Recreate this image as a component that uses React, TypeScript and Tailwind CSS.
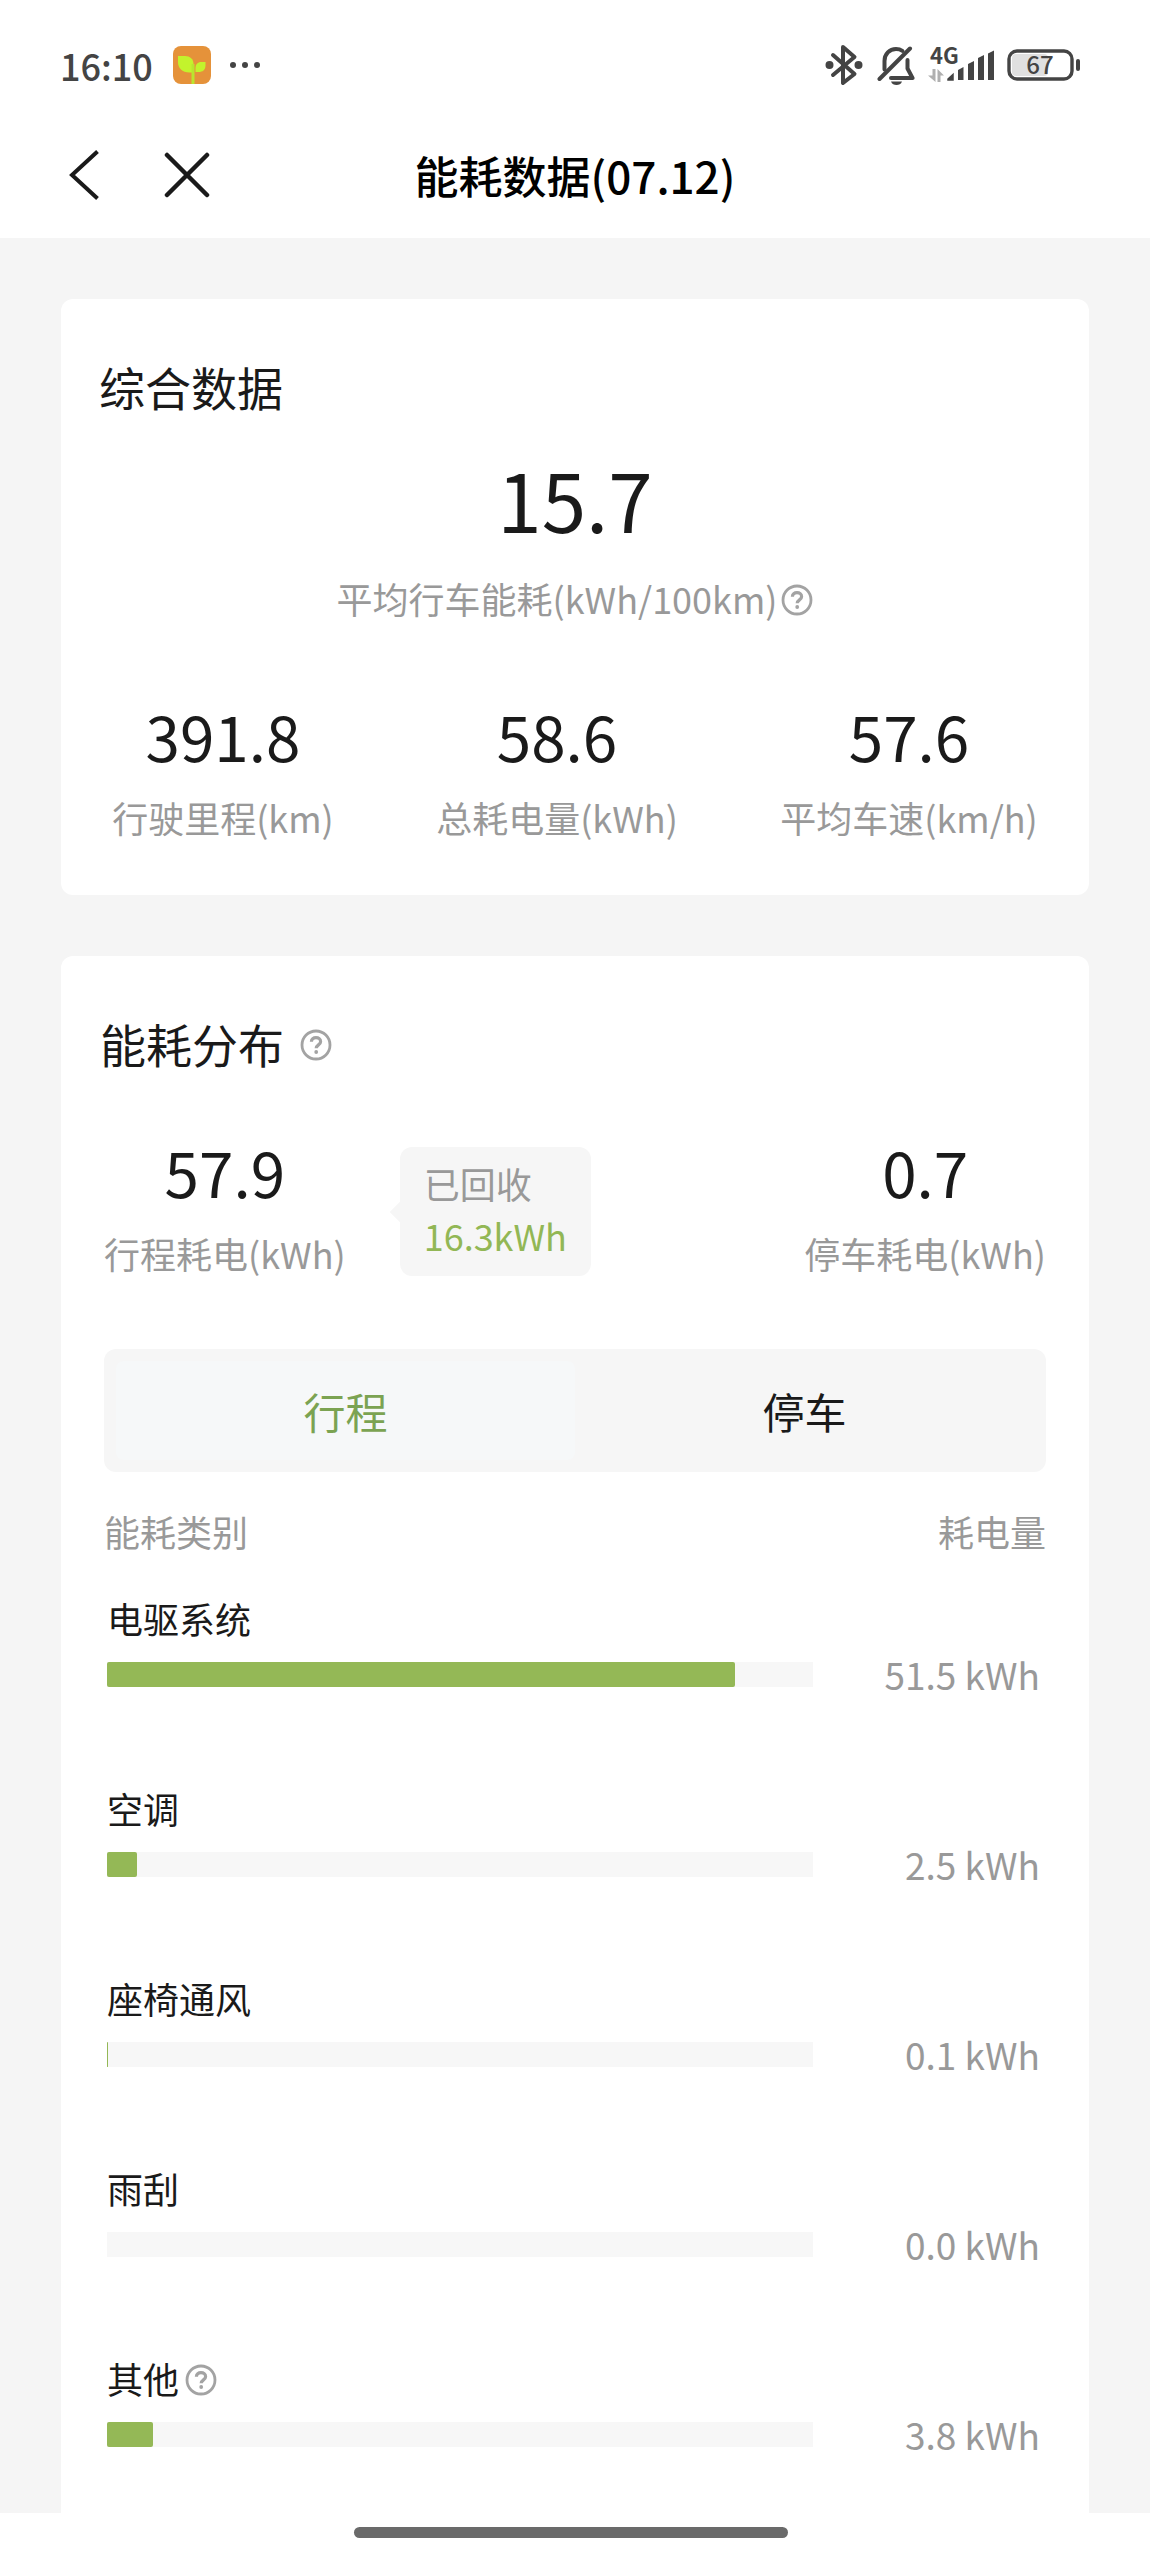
import { useState } from "react";

interface Consumption {
  name: string;
  value: number;
  help?: boolean;
}

const TRIP_TOTAL = 57.9;

const tripItems: Consumption[] = [
  { name: "电驱系统", value: 51.5 },
  { name: "空调", value: 2.5 },
  { name: "座椅通风", value: 0.1 },
  { name: "雨刮", value: 0.0 },
  { name: "其他", value: 3.8, help: true },
];

const summary = [
  { value: "391.8", label: "行驶里程(km)" },
  { value: "58.6", label: "总耗电量(kWh)" },
  { value: "57.6", label: "平均车速(km/h)" },
];

const tabs = ["行程", "停车"];

function HelpButton({ label }: { label: string }) {
  return (
    <button type="button" aria-label={label} className="shrink-0 pt-1">
      <svg viewBox="0 0 32 32" className="size-8" fill="none" stroke="#a3a3a3">
        <circle cx="16" cy="16" r="14" strokeWidth="2.8" />
        <path
          d="M11.4 12.8c0-2.600 2-4.100 4.600-4.100s4.600 1.500 4.600 4c0 3.200-4.400 3.200-4.400 6.600"
          strokeWidth="3.200"
        />
        <circle cx="16.2" cy="23" r="1.900" fill="#a3a3a3" stroke="none" />
      </svg>
    </button>
  );
}

function StatusBar() {
  return (
    <div className="flex h-[130px] items-center justify-between pr-[69px] pl-[60px] text-[#444]">
      <div className="flex items-center">
        <span className="text-[36px] leading-[48px] font-medium">16:10</span>
        <svg viewBox="0 0 38 38" className="ml-5 size-[38px]">
          <rect width="38" height="38" rx="8" fill="#e5923a" />
          <path
            d="M5 10h7c5 0 8.500 3 8.500 8v8.500h-4C9 26.500 5 22 5 16z"
            fill="#c3f32c"
          />
          <path d="M32.500 16h-4c-4 0-6 2.500-6 6v4h3c4 0 7-2 7-6.500z" fill="#c3f32c" />
          <path d="M20 18v20" stroke="#b9e62e" strokeWidth="3" />
        </svg>
        <svg viewBox="0 0 32 8" className="ml-[18px] h-2 w-8" fill="#444">
          <circle cx="4" cy="4" r="3" />
          <circle cx="16" cy="4" r="3" />
          <circle cx="28" cy="4" r="3" />
        </svg>
      </div>

      <div className="flex items-center">
        <svg
          viewBox="0 0 38 42"
          className="h-[42px] w-[38px]"
          fill="none"
          stroke="#444"
          strokeWidth="4"
          strokeLinejoin="round"
          strokeLinecap="round"
        >
          <path d="M8 11l21.500 19L18 39V3l11.500 10L8 31" />
          <circle cx="4.500" cy="21" r="2" fill="#444" />
          <circle cx="33.500" cy="21" r="2" fill="#444" />
        </svg>
        <svg
          viewBox="0 0 38 40"
          className="ml-[14px] h-10 w-[38px]"
          fill="none"
          stroke="#444"
          strokeWidth="4"
          strokeLinecap="round"
        >
          <path d="M2.500 34L33 3.500" />
          <path d="M7.500 24.500V16C7.500 9 12.500 4 19 4c2.600 0 4.600.6 6.400 1.800" />
          <path d="M30.500 15v8.500l5 9.500H14" strokeLinejoin="round" />
          <path
            d="M14 36.500h11c-1 2.600-3 3.500-5.500 3.500s-4.500-.9-5.500-3.500z"
            fill="#444"
            stroke="none"
          />
        </svg>
        <svg
          viewBox="0 0 66 40"
          className="ml-[13px] h-10 w-[66px] overflow-visible"
          fill="#444"
        >
          <text x="2" y="19" fontSize="22" fontWeight="700">
            4G
          </text>
          <g fill="#b0b0b0">
            <path d="M4.500 24v6.500H0l7.500 6.500V24z" />
            <path d="M9.500 37V24l6.500 6.500h-3.500V37z" />
          </g>
          <path d="M20 34l5-4.500V35h-5z" stroke="#444" strokeWidth="1.500" />
          <path d="M30 25l5.500-3v13H30z" />
          <path d="M40 19l6-3v19h-6z" />
          <path d="M50 13l6-3v25h-6z" />
          <path d="M60 8.500l6-3V35h-6z" />
        </svg>
        <svg viewBox="0 0 74 34" className="ml-[13px] h-[34px] w-[74px] overflow-visible">
          <rect x="5" y="6" width="36" height="22" rx="4" fill="#e0e0e0" />
          <rect
            x="2"
            y="3"
            width="63"
            height="28"
            rx="8"
            fill="none"
            stroke="#444"
            strokeWidth="3.400"
          />
          <rect x="69" y="11" width="4" height="12" rx="2" fill="#444" />
          <text x="33" y="26" fontSize="24" fontWeight="500" textAnchor="middle" fill="#444">
            67
          </text>
        </svg>
      </div>
    </div>
  );
}

function Metric({ value, label }: { value: string; label: string }) {
  return (
    <div className="text-center">
      <p className="text-[62px] leading-[80px]">{value}</p>
      <p className="mt-[18px] text-[36px] leading-[48px] text-[#999]">{label}</p>
    </div>
  );
}

export default function App() {
  const [activeTab, setActiveTab] = useState("行程");
  const items = activeTab === "行程" ? tripItems : [];

  return (
    <div
      lang="zh-CN"
      className="flex min-h-screen flex-col bg-[#f5f5f5] font-['Noto_Sans_CJK_SC',sans-serif] text-[#1a1a1a]"
    >
      <header className="bg-white">
        <StatusBar />
        <div className="grid h-[108px] grid-cols-[1fr_auto_1fr] items-center px-[60px] pb-[18px]">
          <div className="flex items-center gap-[58px]">
            <button type="button" aria-label="返回">
              <svg viewBox="0 0 46 50" className="h-[50px] w-[46px]" fill="none" stroke="#1a1a1a">
                <path d="M37.500 1.500L12 25l25.500 23.500" strokeWidth="4" />
              </svg>
            </button>
            <button type="button" aria-label="关闭">
              <svg
                viewBox="0 0 46 46"
                className="size-[46px]"
                fill="none"
                stroke="#1a1a1a"
                strokeLinecap="round"
              >
                <path d="M3 3l40 40M43 3L3 43" strokeWidth="4.500" />
              </svg>
            </button>
          </div>
          <h1 className="text-[44px] leading-[60px] font-medium text-black">能耗数据(07.12)</h1>
        </div>
      </header>

      <main className="flex flex-1 flex-col gap-[61px] px-[61px] pt-[61px]">
        <section className="rounded-xl bg-white pt-[57px] pb-[54px]">
          <h2 className="px-[38px] text-[46px] leading-[60px]">综合数据</h2>
          <p className="mt-8 text-center text-[80px] leading-[100px]">15.7</p>
          <div className="mt-[26px] flex items-center justify-center gap-1">
            <span className="text-[36px] leading-[48px] text-[#999]">
              平均行车能耗(kWh/100km)
            </span>
            <HelpButton label="平均行车能耗说明" />
          </div>
          <div className="mt-[73px] flex justify-around">
            {summary.map((item) => (
              <Metric key={item.label} value={item.value} label={item.label} />
            ))}
          </div>
        </section>

        <section className="flex-1 rounded-t-xl bg-white px-[43px] pt-[57px] pb-16">
          <div className="-ml-1 flex items-center gap-4">
            <h2 className="text-[46px] leading-[60px]">能耗分布</h2>
            <HelpButton label="能耗分布说明" />
          </div>

          <div className="mt-[58px] flex items-start">
            <Metric value="57.9" label="行程耗电(kWh)" />
            <div className="relative mt-4 ml-[54px] rounded-xl bg-[#f6f6f6] px-6 pt-2.5 pb-[15px] text-[36px] leading-[52px]">
              <span className="absolute top-1/2 -left-[7px] size-4 -translate-y-1/2 rotate-45 bg-[#f6f6f6]" />
              <p className="text-[#999]">已回收</p>
              <p className="text-[#92b755]">16.3kWh</p>
            </div>
            <div className="ml-auto">
              <Metric value="0.7" label="停车耗电(kWh)" />
            </div>
          </div>

          <div role="tablist" className="mt-[72px] flex rounded-xl bg-[#f6f6f6] p-3">
            {tabs.map((tab) => (
              <button
                key={tab}
                type="button"
                role="tab"
                aria-selected={activeTab === tab}
                onClick={() => setActiveTab(tab)}
                className={`h-[99px] flex-1 rounded-lg text-[42px] leading-[60px] ${
                  activeTab === tab ? "bg-[#f6f8f9] text-[#7ba352]" : ""
                }`}
              >
                {tab}
              </button>
            ))}
          </div>

          <table className="mt-[35px] w-full text-[36px] leading-[48px]">
            <thead className="text-[#999]">
              <tr>
                <th scope="col" className="text-left font-normal">
                  能耗类别
                </th>
                <th scope="col" className="w-[233px] text-right font-normal">
                  耗电量
                </th>
              </tr>
            </thead>
            <tbody>
              {items.map((item) => (
                <tr key={item.name} className="group">
                  <th
                    scope="row"
                    className="pt-[97px] pl-[3px] text-left font-normal group-first:pt-[39px]"
                  >
                    <div className="flex items-center gap-1.5">
                      {item.name}
                      {item.help && <HelpButton label="其他能耗说明" />}
                    </div>
                    <div className="mt-5 h-[25px] bg-[#f7f7f7]">
                      <div
                        className="h-full rounded-xs bg-[#94b856]"
                        style={{ width: `${(item.value / TRIP_TOTAL) * 100}%` }}
                      />
                    </div>
                  </th>
                  <td className="pr-1.5 text-right align-bottom text-[37px] leading-[25px] text-[#999]">
                    {item.value.toFixed(1)} kWh
                  </td>
                </tr>
              ))}
            </tbody>
          </table>
        </section>
      </main>

      <footer className="flex h-[46px] items-start justify-center bg-white pt-3.5 pr-2">
        <div className="h-[11px] w-[38%] rounded-full bg-[#6a6a6a]" />
      </footer>
    </div>
  );
}
